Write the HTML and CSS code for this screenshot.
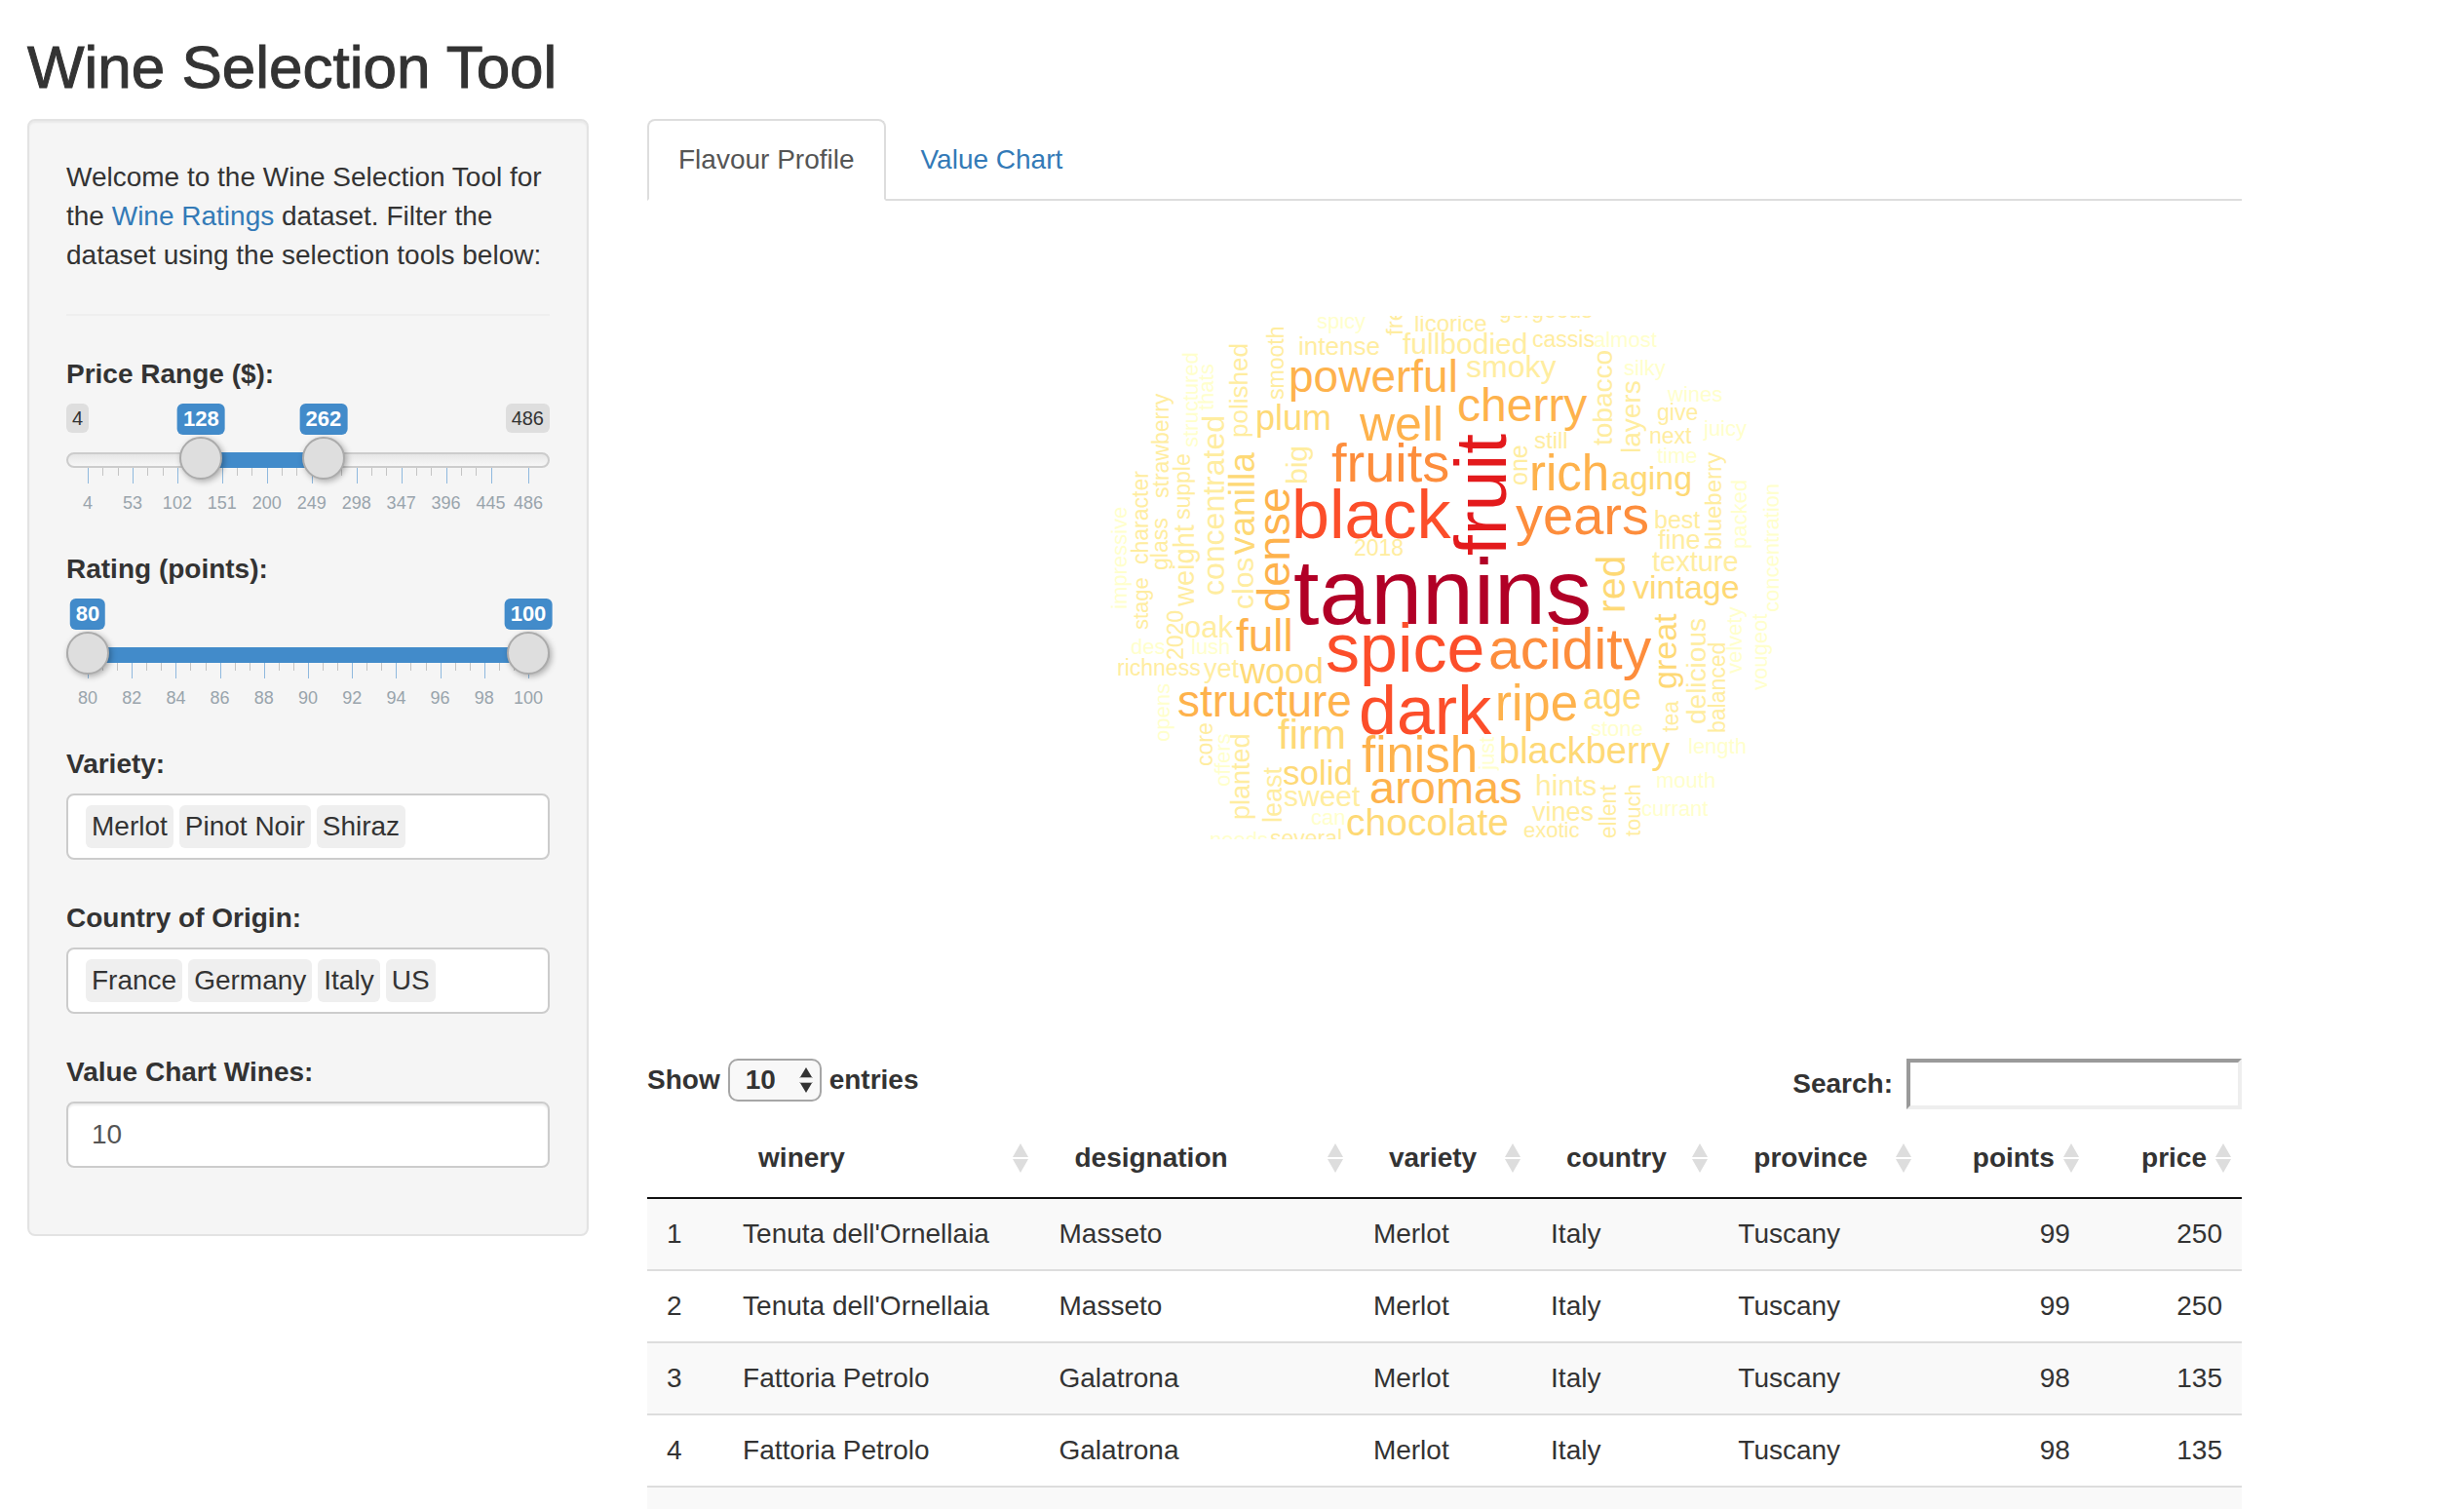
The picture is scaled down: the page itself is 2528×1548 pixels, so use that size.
FILE: index.html
```html
<!DOCTYPE html>
<html lang="en">
<head>
<meta charset="utf-8">
<title>Wine Selection Tool</title>
<meta name="viewport" content="width=device-width, initial-scale=1">
<link rel="stylesheet" href="styles.css">
</head>
<body>
<h1 class="page-title">Wine Selection Tool</h1>
<div class="row">
  <aside class="col-side">
    <form class="well">
      <p class="intro">Welcome to the Wine Selection Tool for the <a href="#ratings">Wine Ratings</a> dataset. Filter the dataset using the selection tools below:</p>
      <hr class="rule">

      <div class="group">
        <label class="control-label" for="price-from">Price Range ($):</label>
        <div class="slider" data-min="4" data-max="486" data-step="49">
          <span class="limit limit-min">4</span>
          <span class="limit limit-max">486</span>
          <div class="track"></div>
          <div class="scale">
            <div class="fill" style="left:25.73%;width:27.8%"></div>
            <output class="bubble" style="left:25.73%">128</output>
            <output class="bubble" style="left:53.53%">262</output>
          </div>
          <input class="range" type="range" id="price-from" min="4" max="486" value="128">
          <input class="range" type="range" id="price-to" min="4" max="486" value="262" aria-label="Maximum price">
        </div>
      </div>

      <div class="group">
        <label class="control-label" for="rating-from">Rating (points):</label>
        <div class="slider" data-min="80" data-max="100" data-step="2">
          <div class="track"></div>
          <div class="scale">
            <div class="fill" style="left:0%;width:100%"></div>
            <output class="bubble" style="left:0%">80</output>
            <output class="bubble" style="left:100%">100</output>
          </div>
          <input class="range" type="range" id="rating-from" min="80" max="100" value="80">
          <input class="range" type="range" id="rating-to" min="80" max="100" value="100" aria-label="Maximum rating">
        </div>
      </div>

      <div class="group group-tags">
        <label class="control-label" for="variety">Variety:</label>
        <div class="tag-box">
          <span class="tag">Merlot</span><span class="tag">Pinot Noir</span><span class="tag">Shiraz</span>
          <input class="tag-input" type="text" id="variety">
        </div>
      </div>

      <div class="group group-tags">
        <label class="control-label" for="country">Country of Origin:</label>
        <div class="tag-box">
          <span class="tag">France</span><span class="tag">Germany</span><span class="tag">Italy</span><span class="tag">US</span>
          <input class="tag-input" type="text" id="country">
        </div>
      </div>

      <div class="group">
        <label class="control-label" for="wines">Value Chart Wines:</label>
        <input class="number" type="number" id="wines" value="10">
      </div>
    </form>
  </aside>

  <main class="col-main">
    <nav class="tabs">
      <a class="tab tab-active" href="#flavour">Flavour Profile</a>
      <a class="tab" href="#value">Value Chart</a>
    </nav>

    <div class="cloud">
      <svg class="cloud-svg" viewBox="0 0 700 537" role="img" aria-label="Flavour word cloud">
        <g class="w7"><text x="195" y="316" font-size="95">tannins</text></g>
        <g class="w6"><text transform="translate(413 246) rotate(-90)" font-size="75">fruit</text></g>
        <g class="w5">
          <text x="193" y="228" font-size="70">black</text>
          <text x="228" y="365" font-size="70">spice</text>
          <text x="262" y="429" font-size="70">dark</text>
        </g>
        <g class="w4">
          <text x="395" y="362" font-size="59">acidity</text>
          <text x="423" y="224" font-size="56">years</text>
          <text x="234" y="170" font-size="56">fruits</text>
        </g>
        <g class="w3">
          <text x="263" y="128" font-size="50">well</text>
          <text x="190" y="78" font-size="46">powerful</text>
          <text x="363" y="108" font-size="48">cherry</text>
          <text x="437" y="179" font-size="51">rich</text>
          <text x="402" y="415" font-size="51">ripe</text>
          <text x="136" y="344" font-size="46">full</text>
          <text x="76" y="411" font-size="46">structure</text>
          <text x="265" y="468" font-size="51">finish</text>
          <text x="273" y="500" font-size="47">aromas</text>
          <text transform="translate(191 304) rotate(-90)" font-size="47">dense</text>
        </g>
        <g class="w2">
          <text transform="translate(155 245) rotate(-90)" font-size="37">vanilla</text>
          <text transform="translate(535 305) rotate(-90)" font-size="41">red</text>
          <text transform="translate(588 383) rotate(-90)" font-size="34">great</text>
          <text x="156" y="117" font-size="36">plum</text>
          <text x="521" y="178" font-size="34">aging</text>
          <text x="543" y="290" font-size="34">vintage</text>
          <text x="492" y="403" font-size="36">age</text>
          <text x="406" y="459" font-size="38">blackberry</text>
          <text x="140" y="377" font-size="36">wood</text>
          <text x="179" y="444" font-size="42">firm</text>
          <text x="184" y="481" font-size="35">solid</text>
          <text x="249" y="533" font-size="39">chocolate</text>
        </g>
        <g class="w1">
          <text transform="translate(124 287) rotate(-90)" font-size="32">concentrated</text>
          <text transform="translate(148 125) rotate(-90)" font-size="26">polished</text>
          <text transform="translate(185 86) rotate(-90)" font-size="23">smooth</text>
          <text transform="translate(209 173) rotate(-90)" font-size="30">big</text>
          <text transform="translate(307 20) rotate(-90)" font-size="24">fresh</text>
          <text transform="translate(522 133) rotate(-90)" font-size="28">tobacco</text>
          <text transform="translate(551 141) rotate(-90)" font-size="28">layers</text>
          <text transform="translate(435 174) rotate(-90)" font-size="25">one</text>
          <text transform="translate(634 240) rotate(-90)" font-size="24">blueberry</text>
          <text transform="translate(618 419) rotate(-90)" font-size="28">delicious</text>
          <text transform="translate(638 428) rotate(-90)" font-size="23">balanced</text>
          <text transform="translate(590 427) rotate(-90)" font-size="23">tea</text>
          <text transform="translate(526 572) rotate(-90)" font-size="23">excellent</text>
          <text transform="translate(551 534) rotate(-90)" font-size="22">touch</text>
          <text transform="translate(46 322) rotate(-90)" font-size="22">stage</text>
          <text transform="translate(46 255) rotate(-90)" font-size="23">character</text>
          <text transform="translate(67 187) rotate(-90)" font-size="23">strawberry</text>
          <text transform="translate(66 261) rotate(-90)" font-size="23">glass</text>
          <text transform="translate(89 209) rotate(-90)" font-size="23">supple</text>
          <text transform="translate(93 298) rotate(-90)" font-size="29">weight</text>
          <text transform="translate(154 301) rotate(-90)" font-size="30">clos</text>
          <text transform="translate(82 353) rotate(-90)" font-size="23">2020</text>
          <text transform="translate(112 462) rotate(-90)" font-size="23">core</text>
          <text transform="translate(150 517) rotate(-90)" font-size="27">planted</text>
          <text transform="translate(183 520) rotate(-90)" font-size="27">least</text>
          <text x="200" y="40" font-size="26">intense</text>
          <text x="307" y="39" font-size="30">fullbodied</text>
          <text x="319" y="16" font-size="24">licorice</text>
          <text x="406" y="2" font-size="23">gorgeous</text>
          <text x="440" y="32" font-size="23">cassis</text>
          <text x="372" y="63" font-size="32">smoky</text>
          <text x="568" y="107" font-size="23">give</text>
          <text x="560" y="131" font-size="23">next</text>
          <text x="442" y="136" font-size="24">still</text>
          <text x="257" y="246" font-size="23">2018</text>
          <text x="565" y="218" font-size="25">best</text>
          <text x="569" y="239" font-size="27">fine</text>
          <text x="563" y="262" font-size="29">texture</text>
          <text x="443" y="492" font-size="30">hints</text>
          <text x="440" y="518" font-size="27">vines</text>
          <text x="431" y="535" font-size="22">exotic</text>
          <text x="83" y="330" font-size="31">oak</text>
          <text x="14" y="369" font-size="23">richness</text>
          <text x="103" y="371" font-size="27">yet</text>
          <text x="185" y="503" font-size="30">sweet</text>
          <text x="171" y="544" font-size="23">several</text>
        </g>
        <g class="w0">
          <text transform="translate(660 239) rotate(-90)" font-size="22">packed</text>
          <text transform="translate(693 304) rotate(-90)" font-size="22">concentration</text>
          <text transform="translate(655 367) rotate(-90)" font-size="22">velvety</text>
          <text transform="translate(681 384) rotate(-90)" font-size="22">vougeot</text>
          <text transform="translate(401 466) rotate(-90)" font-size="22">just</text>
          <text transform="translate(24 301) rotate(-90)" font-size="22">impressive</text>
          <text transform="translate(97 135) rotate(-90)" font-size="22">structured</text>
          <text transform="translate(113 97) rotate(-90)" font-size="22">thats</text>
          <text transform="translate(68 437) rotate(-90)" font-size="22">opens</text>
          <text transform="translate(130 483) rotate(-90)" font-size="22">offers</text>
          <text x="219" y="13" font-size="22">spicy</text>
          <text x="503" y="32" font-size="22">almost</text>
          <text x="534" y="61" font-size="22">silky</text>
          <text x="579" y="88" font-size="22">wines</text>
          <text x="568" y="151" font-size="22">time</text>
          <text x="616" y="123" font-size="22">juicy</text>
          <text x="500" y="431" font-size="22">stone</text>
          <text x="600" y="449" font-size="22">length</text>
          <text x="567" y="484" font-size="22">mouth</text>
          <text x="552" y="513" font-size="22">currant</text>
          <text x="90" y="347" font-size="22">lush</text>
          <text x="28" y="347" font-size="22">des</text>
          <text x="213" y="522" font-size="22">can</text>
          <text x="109" y="545" font-size="22">needs</text>
        </g>
      </svg>
    </div>

    <div class="table-tools">
      <div class="length">
        <label for="length">Show</label>
        <span class="select-wrap">
          <select class="select" id="length"><option>10</option><option>25</option><option>50</option></select>
          <svg class="select-arrows" viewBox="0 0 14 28" aria-hidden="true"><path d="M7 1l6 10H1zM7 27l6-10H1z" fill="#333"/><path d="M0 11.500h14M0 16.500h14" stroke="#bbb"/></svg>
        </span>
        <span>entries</span>
      </div>
      <div class="search">
        <label for="search">Search:</label>
        <input class="search-input" type="search" id="search">
      </div>
    </div>

    <table class="wines">
      <colgroup><col class="c-index"><col class="c-winery"><col class="c-designation"><col class="c-variety"><col class="c-country"><col class="c-province"><col class="c-points"><col class="c-price"></colgroup>
      <thead>
        <tr>
          <th></th>
          <th><button class="sort" type="button">winery<svg class="sort-icon" viewBox="0 0 16 30"><path d="M8 0l8 14H0zM8 30l8-14H0z"/></svg></button></th>
          <th><button class="sort" type="button">designation<svg class="sort-icon" viewBox="0 0 16 30"><path d="M8 0l8 14H0zM8 30l8-14H0z"/></svg></button></th>
          <th><button class="sort" type="button">variety<svg class="sort-icon" viewBox="0 0 16 30"><path d="M8 0l8 14H0zM8 30l8-14H0z"/></svg></button></th>
          <th><button class="sort" type="button">country<svg class="sort-icon" viewBox="0 0 16 30"><path d="M8 0l8 14H0zM8 30l8-14H0z"/></svg></button></th>
          <th><button class="sort" type="button">province<svg class="sort-icon" viewBox="0 0 16 30"><path d="M8 0l8 14H0zM8 30l8-14H0z"/></svg></button></th>
          <th><button class="sort sort-num" type="button">points<svg class="sort-icon" viewBox="0 0 16 30"><path d="M8 0l8 14H0zM8 30l8-14H0z"/></svg></button></th>
          <th><button class="sort sort-num" type="button">price<svg class="sort-icon" viewBox="0 0 16 30"><path d="M8 0l8 14H0zM8 30l8-14H0z"/></svg></button></th>
        </tr>
      </thead>
      <tbody>
        <tr><td>1</td><td>Tenuta dell'Ornellaia</td><td>Masseto</td><td>Merlot</td><td>Italy</td><td>Tuscany</td><td class="num">99</td><td class="num">250</td></tr>
        <tr><td>2</td><td>Tenuta dell'Ornellaia</td><td>Masseto</td><td>Merlot</td><td>Italy</td><td>Tuscany</td><td class="num">99</td><td class="num">250</td></tr>
        <tr><td>3</td><td>Fattoria Petrolo</td><td>Galatrona</td><td>Merlot</td><td>Italy</td><td>Tuscany</td><td class="num">98</td><td class="num">135</td></tr>
        <tr><td>4</td><td>Fattoria Petrolo</td><td>Galatrona</td><td>Merlot</td><td>Italy</td><td>Tuscany</td><td class="num">98</td><td class="num">135</td></tr>
        <tr><td>&nbsp;</td><td></td><td></td><td></td><td></td><td></td><td></td><td></td></tr>
      </tbody>
    </table>
  </main>
</div>
<script src="script.js"></script>
</body>
</html>
```

FILE: styles.css
```css
*,
*::before,
*::after {
  box-sizing: border-box;
}

body {
  margin: 0;
  height: 100vh;
  overflow: hidden;
  background: #fff;
  color: #333;
  font: 28px/40px "Helvetica Neue", "Liberation Sans", Arial, sans-serif;
}

a {
  color: #337ab7;
  text-decoration: none;
}

input,
select,
button {
  font: inherit;
  color: inherit;
}

.page-title {
  margin: 36px 28px 20px;
  font-size: 62px;
  line-height: 66px;
  font-weight: 500;
  -webkit-text-stroke: 1px #333;
}

/* Twelve-column row: three for the filters, eight for the results */
.row {
  display: flex;
  align-items: flex-start;
  margin: 0 -14px 0 -2px;
}

.col-side {
  flex: 0 0 25%;
  min-width: 0;
  padding: 0 30px;
}

.col-main {
  flex: 0 0 calc(200% / 3);
  min-width: 0;
  padding: 0 30px;
}

.well {
  padding: 38px;
  border: 2px solid #e3e3e3;
  border-radius: 8px;
  background: #f5f5f5;
  box-shadow: inset 0 2px 2px rgba(0, 0, 0, .05);
}

.intro {
  margin: 0;
}

.rule {
  margin: 40px 0;
  border: 0;
  border-top: 2px solid #eee;
}

.group {
  margin-bottom: 30px;
}

.group-tags {
  margin-bottom: 40px;
}

.control-label {
  display: block;
  margin-bottom: 10px;
  font-weight: 700;
}

/* Range slider */
.slider {
  position: relative;
  height: 120px;
}

.track {
  position: absolute;
  top: 50px;
  left: 0;
  right: 0;
  height: 16px;
  border: 2px solid #ccc;
  border-radius: 16px;
  background: linear-gradient(to bottom, #dedede -50%, #fff 150%);
}

.scale {
  position: absolute;
  top: 0;
  bottom: 0;
  left: 22px;
  right: 22px;
}

.fill {
  position: absolute;
  top: 50px;
  height: 16px;
  background: #428bca;
}

.bubble,
.limit {
  position: absolute;
  top: 0;
  padding: 0 6px;
  border-radius: 6px;
  white-space: nowrap;
}

.bubble {
  transform: translateX(-50%);
  background: #428bca;
  color: #fff;
  font-size: 22px;
  line-height: 32px;
  font-weight: 700;
}

.limit {
  background: #dedede;
  font-size: 20px;
  line-height: 30px;
}

.limit-min {
  left: 0;
}

.limit-max {
  right: 0;
}

.tick {
  position: absolute;
  top: 66px;
  width: 1px;
  height: 8px;
  background: #c4c4c4;
}

.tick-major {
  height: 16px;
  background: #8fb9de;
}

.tick-label {
  position: absolute;
  top: 90px;
  transform: translateX(-50%);
  color: #99a4ac;
  font-size: 18px;
  line-height: 24px;
}

.range {
  position: absolute;
  top: 34px;
  left: 0;
  width: 100%;
  height: 44px;
  margin: 0;
  background: none;
  appearance: none;
  pointer-events: none;
}

.range::-webkit-slider-thumb {
  appearance: none;
  width: 44px;
  height: 44px;
  border: 2px solid #ababab;
  border-radius: 50%;
  background: #dedede;
  box-shadow: 2px 2px 6px rgba(0, 0, 0, .3);
  pointer-events: auto;
}

/* Text controls */
.tag-box,
.number {
  width: 100%;
  height: 68px;
  border: 2px solid #ccc;
  border-radius: 8px;
  background: #fff;
}

.tag-box {
  display: flex;
  align-items: center;
  gap: 6px;
  padding: 0 18px;
}

.tag {
  padding: 2px 6px;
  border-radius: 6px;
  background: #efefef;
  white-space: nowrap;
}

.tag-input {
  flex: 1;
  min-width: 0;
  padding: 0;
  border: 0;
  outline: 0;
  background: none;
}

.number {
  display: block;
  padding: 0 24px;
  color: #555;
  box-shadow: inset 0 2px 2px rgba(0, 0, 0, .075);
  appearance: textfield;
}

/* Tabs */
.tabs {
  display: flex;
  gap: 4px;
  box-shadow: inset 0 -2px #ddd;
}

.tab {
  padding: 20px 30px;
  border: 2px solid transparent;
  border-radius: 8px 8px 0 0;
}

.tab-active {
  border-color: #ddd;
  border-bottom-color: #fff;
  background: #fff;
  color: #555;
}

/* Word cloud */
.cloud {
  display: flex;
  justify-content: center;
  padding: 118px 0 225px;
}

.cloud-svg {
  display: block;
  width: 700px;
  max-width: 100%;
  overflow: hidden;
}

.w7 { fill: #b10026; }
.w6 { fill: #e31a1c; }
.w5 { fill: #fc4e2a; }
.w4 { fill: #fd8d3c; }
.w3 { fill: #feb24c; }
.w2 { fill: #fed976; }
.w1 { fill: #ffeda0; }
.w0 { fill: #ffffcc; }

/* Table */
.table-tools {
  display: flex;
  justify-content: space-between;
  align-items: flex-start;
  margin-bottom: 10px;
  font-weight: 700;
}

.length,
.search {
  display: flex;
  align-items: center;
}

.length {
  gap: 8px;
}

.search {
  gap: 14px;
}

.select-wrap {
  position: relative;
  display: flex;
}

.select {
  width: 96px;
  height: 44px;
  padding: 0 16px;
  border: 2px solid #a6a6a6;
  border-radius: 10px;
  background: #f8f8f8;
  appearance: none;
}

.select-arrows {
  position: absolute;
  top: 8px;
  right: 9px;
  width: 14px;
  height: 28px;
  pointer-events: none;
}

.search-input {
  width: 344px;
  height: 52px;
  padding: 2px;
  border: 4px solid;
  border-color: #9a9a9a #eee #eee #9a9a9a;
  background: #fff;
  appearance: none;
  outline-offset: 0;
}

.wines {
  width: 100%;
  table-layout: fixed;
  border-collapse: separate;
  border-spacing: 0;
}

.c-index { width: 78px; }
.c-winery { width: 324px; }
.c-designation { width: 322px; }
.c-variety { width: 182px; }
.c-country { width: 192px; }
.c-province { width: 208px; }
.c-points { width: 172px; }
.c-price { width: 156px; }

.wines th {
  padding: 0;
  border-bottom: 2px solid #111;
}

.sort {
  display: flex;
  align-items: center;
  justify-content: space-between;
  gap: 9px;
  width: 100%;
  padding: 20px 11px 20px 36px;
  border: 0;
  background: none;
  font-weight: 700;
}

.sort-num {
  justify-content: flex-end;
  padding-left: 0;
}

.sort-icon {
  width: 16px;
  height: 30px;
  fill: #ddd;
}

.wines td {
  padding: 16px 20px;
  border-top: 2px solid #ddd;
  white-space: nowrap;
}

.wines tr:first-child td {
  border-top: 0;
}

.wines tbody tr:nth-child(odd) {
  background: #f9f9f9;
}

.wines .num {
  text-align: right;
}
```

FILE: script.js
```js
// Draw the tick grid under each slider: a labelled tick per step, two minor ticks between.
document.querySelectorAll('.slider').forEach(function (slider) {
  var min = Number(slider.dataset.min);
  var max = Number(slider.dataset.max);
  var step = Number(slider.dataset.step);
  var scale = slider.querySelector('.scale');

  function add(className, value, text) {
    var el = document.createElement('span');
    el.className = className;
    el.style.left = (value - min) / (max - min) * 100 + '%';
    el.textContent = text || '';
    scale.appendChild(el);
  }

  for (var v = min; v <= max; v += step) {
    add('tick tick-major', v);
    add('tick-label', v, String(v));
    if (v + step <= max) {
      add('tick', v + step / 3);
      add('tick', v + step * 2 / 3);
    }
  }
  if (v - step < max) {
    add('tick tick-major', max);
    add('tick-label', max, String(max));
  }
});
```
